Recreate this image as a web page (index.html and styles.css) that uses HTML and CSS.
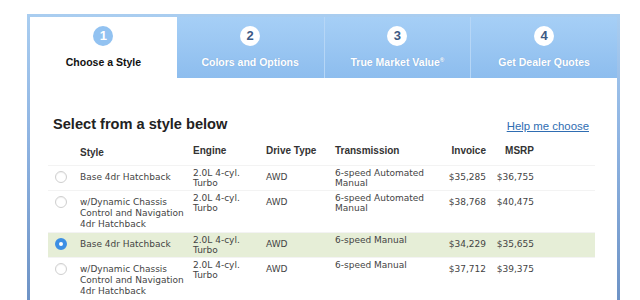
FILE: index.html
```html
<!DOCTYPE html>
<html lang="en">
<head>
    <meta charset="UTF-8">
    <title>Choose a Style</title>
    <link rel="stylesheet" href="styles.css">
</head>
<body>
    <div class="wizard">
        <div class="steps">
            <div class="step active">
                <span class="num">1</span>
                <span class="label">Choose a Style</span>
            </div>
            <div class="step">
                <span class="num">2</span>
                <span class="label">Colors and Options</span>
            </div>
            <div class="step">
                <span class="num">3</span>
                <span class="label">True Market Value<sup>&reg;</sup></span>
            </div>
            <div class="step">
                <span class="num">4</span>
                <span class="label">Get Dealer Quotes</span>
            </div>
        </div>
        <div class="content">
            <div class="title-row">
                <h2>Select from a style below</h2>
                <a href="#" class="help">Help me choose</a>
            </div>
            <table class="styles">
                <colgroup>
                    <col class="c-radio">
                    <col class="c-style">
                    <col class="c-engine">
                    <col class="c-drive">
                    <col class="c-trans">
                    <col class="c-invoice">
                    <col class="c-msrp">
                    <col>
                </colgroup>
                <thead>
                    <tr>
                        <th></th>
                        <th class="th-style">Style</th>
                        <th>Engine</th>
                        <th>Drive Type</th>
                        <th>Transmission</th>
                        <th class="price">Invoice</th>
                        <th class="price">MSRP</th>
                        <th></th>
                    </tr>
                </thead>
                <tbody>
                    <tr>
                        <td><span class="radio"></span></td>
                        <td>Base 4dr Hatchback</td>
                        <td class="tight">2.0L 4-cyl. Turbo</td>
                        <td>AWD</td>
                        <td class="tight">6-speed Automated Manual</td>
                        <td class="price">$35,285</td>
                        <td class="price">$36,755</td>
                        <td></td>
                    </tr>
                    <tr>
                        <td><span class="radio"></span></td>
                        <td>w/Dynamic Chassis Control and Navigation 4dr Hatchback</td>
                        <td class="tight">2.0L 4-cyl. Turbo</td>
                        <td>AWD</td>
                        <td class="tight">6-speed Automated Manual</td>
                        <td class="price">$38,768</td>
                        <td class="price">$40,475</td>
                        <td></td>
                    </tr>
                    <tr class="selected">
                        <td><span class="radio checked"></span></td>
                        <td>Base 4dr Hatchback</td>
                        <td class="tight">2.0L 4-cyl. Turbo</td>
                        <td>AWD</td>
                        <td class="tight">6-speed Manual</td>
                        <td class="price">$34,229</td>
                        <td class="price">$35,655</td>
                        <td></td>
                    </tr>
                    <tr>
                        <td><span class="radio"></span></td>
                        <td>w/Dynamic Chassis Control and Navigation 4dr Hatchback</td>
                        <td class="tight">2.0L 4-cyl. Turbo</td>
                        <td>AWD</td>
                        <td class="tight">6-speed Manual</td>
                        <td class="price">$37,712</td>
                        <td class="price">$39,375</td>
                        <td></td>
                    </tr>
                </tbody>
            </table>
        </div>
    </div>
</body>
</html>
```

FILE: styles.css
```css
body {
    margin: 0;
    background: #fff;
    font-family: 'Liberation Sans', Arial, sans-serif;
    color: #222;
}

.wizard {
    box-sizing: border-box;
    width: 593px;
    margin: 14px 0 0 27px;
    border: 3px solid #a9cdf0;
    border-image: linear-gradient(#a9cdf0, #8fb4e2 40%, #6a8fc2) 1;
    background: #fff;
}

/* step tabs */
.steps {
    display: grid;
    grid-template-columns: repeat(4, 1fr);
    height: 61px;
    background: linear-gradient(#a6cff6, #8dbdee);
}

.step {
    display: flex;
    flex-direction: column;
    align-items: center;
    padding-top: 9px;
    border-left: 1px solid #b6d6f6;
}

.step:nth-child(2) {
    border-left: none;
}

.step.active {
    background: #fff;
    border-left: none;
}

.num {
    width: 20px;
    height: 20px;
    border-radius: 50%;
    background: #fff;
    color: #3d5a85;
    font-size: 13px;
    font-weight: bold;
    line-height: 20px;
    text-align: center;
}

.active .num {
    background: #92c2f1;
    color: #fff;
}

.label {
    margin-top: 10px;
    font-size: 10.5px;
    font-weight: bold;
    line-height: 13px;
    color: #fff;
    text-shadow: 0 0 1px rgba(80, 120, 170, 0.4);
}

.label sup {
    font-size: 6px;
    line-height: 0;
    vertical-align: 4px;
}

.active .label {
    color: #111;
    text-shadow: none;
}

/* content */
.content {
    padding: 38px 22px 20px 18px;
}

.title-row {
    display: flex;
    justify-content: space-between;
    align-items: center;
    margin: 0 6px 12px 5px;
}

.title-row h2 {
    margin: 0;
    font-size: 14.6px;
    line-height: 17px;
    color: #222;
}

.help {
    font-size: 11.4px;
    color: #2f6db2;
    text-decoration: underline;
    margin-top: 2px;
}

.styles {
    width: 547px;
    table-layout: fixed;
    border-collapse: collapse;
}

.c-radio { width: 32px; }
.c-style { width: 113px; }
.c-engine { width: 73px; }
.c-drive { width: 69px; }
.c-trans { width: 105px; }
.c-invoice { width: 52px; }
.c-msrp { width: 48px; }

.styles th {
    padding: 0 0 8px 0;
    font-size: 10px;
    line-height: 12px;
    font-weight: bold;
    color: #333;
    text-align: left;
    vertical-align: bottom;
}

.styles th.th-style {
    padding-bottom: 6px;
}

.styles td {
    padding: 6px 6px 2px 0;
    font-family: 'DejaVu Sans', Verdana, sans-serif;
    font-size: 9px;
    line-height: 11px;
    color: #444;
    vertical-align: top;
    border-top: 1px solid #f3f3f3;
}

.styles td.tight {
    padding-top: 2px;
    line-height: 10px;
}

.styles .price {
    text-align: right;
    padding-right: 6px;
}

.styles th.price {
    padding-right: 6px;
}

.selected td {
    background: #e6eed7;
}

.radio {
    display: block;
    box-sizing: border-box;
    width: 12px;
    height: 12px;
    margin: -1px 0 0 7px;
    border: 1px solid #cfcfcf;
    border-radius: 50%;
    background: #fff;
    box-shadow: inset 0 1px 1px rgba(0, 0, 0, 0.06);
}

.radio.checked {
    border: 4px solid #3d8fe4;
    background: #fff;
    box-shadow: none;
}
```
